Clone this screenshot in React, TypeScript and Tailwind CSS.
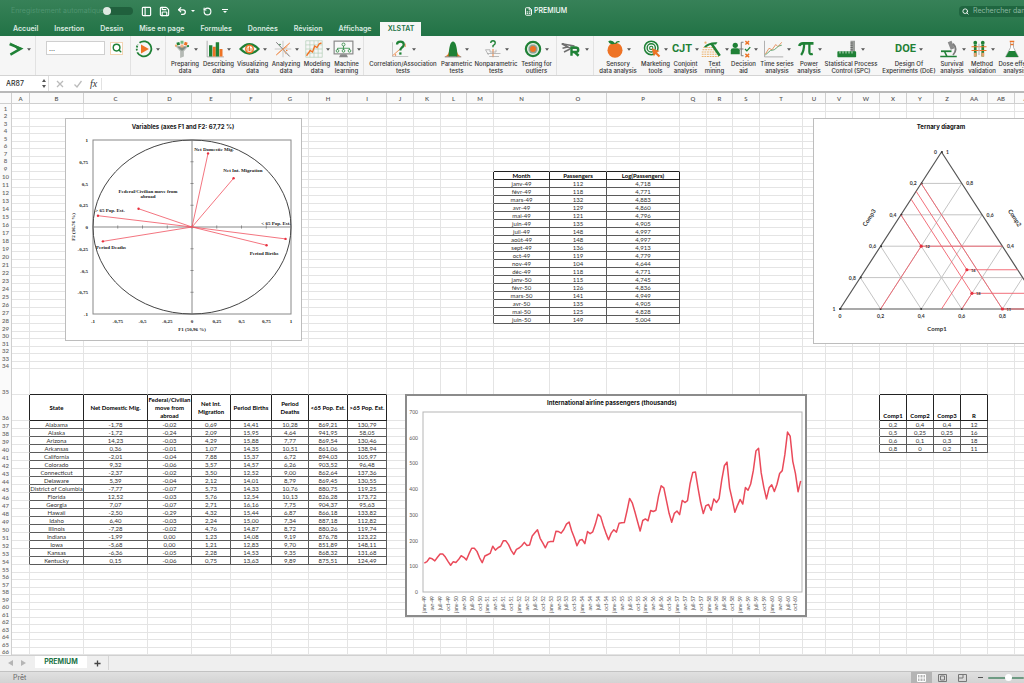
import React from 'react';
import { FileSpreadsheet, Save, PanelLeft, Search, Undo2, RotateCcw } from 'lucide-react';

type CellKind = 'head' | 'body';

interface Block {
  col: number;
  row: number;
  rows: string[][];
}

interface Tool {
  name: string;
  lines: string[];
  width: string;
  icon: React.ReactNode;
}

const GREEN = '#1f8136';
const ORANGE = '#ee7325';

/* ---------- Sheet data ---------- */

const COLUMNS: [string, number | undefined][] = [
  ['A', 18], ['B', 54], ['C', 64], ['D', 44], ['E', 39], ['F', 41], ['G', 37], ['H', 39], ['I', 39],
  ['J', 27], ['K', 27], ['L', 26], ['M', 27], ['N', 56], ['O', 57], ['P', 73], ['Q', 27], ['R', 26],
  ['S', 27], ['T', 43], ['U', 23], ['V', 27], ['W', 27], ['X', 27], ['Y', 27], ['Z', 27], ['AA', 27],
  ['AB', 27], ['AC', undefined],
];

const STATES: Block = {
  col: 1,
  row: 36,
  rows: [
    ['State', 'Net Domestic Mig.', 'Federal/Civilian move from abroad', 'Net Int. Migration', 'Period Births', 'Period Deaths', '<65 Pop. Est.', '>65 Pop. Est.'],
    ['Alabama', '-1,78', '-0,02', '0,69', '14,41', '10,28', '869,21', '130,79'],
    ['Alaska', '-1,72', '-0,24', '2,09', '15,95', '4,64', '941,95', '58,05'],
    ['Arizona', '14,23', '-0,03', '4,29', '15,88', '7,77', '869,54', '130,46'],
    ['Arkansas', '0,36', '-0,01', '1,07', '14,35', '10,51', '861,06', '138,94'],
    ['California', '-2,01', '-0,04', '7,88', '15,37', '6,72', '894,03', '105,97'],
    ['Colorado', '9,32', '-0,06', '3,57', '14,57', '6,26', '903,52', '96,48'],
    ['Connecticut', '-2,37', '-0,02', '3,50', '12,52', '9,00', '862,64', '137,36'],
    ['Delaware', '5,39', '-0,04', '2,12', '14,01', '8,79', '869,45', '130,55'],
    ['District of Columbia', '-7,77', '-0,07', '5,73', '14,33', '10,76', '880,75', '119,25'],
    ['Florida', '12,52', '-0,03', '5,76', '12,54', '10,13', '826,28', '173,72'],
    ['Georgia', '7,07', '-0,07', '2,71', '16,16', '7,75', '904,37', '95,63'],
    ['Hawaii', '-2,50', '-0,29', '4,32', '15,44', '6,87', '866,18', '133,82'],
    ['Idaho', '6,40', '-0,03', '2,24', '15,00', '7,34', '887,18', '112,82'],
    ['Illinois', '-7,28', '-0,02', '4,76', '14,87', '8,72', '880,26', '119,74'],
    ['Indiana', '-1,99', '0,00', '1,23', '14,08', '9,19', '876,78', '123,22'],
    ['Iowa', '-5,68', '0,00', '1,21', '12,83', '9,70', '851,89', '148,11'],
    ['Kansas', '-6,36', '-0,05', '2,28', '14,53', '9,35', '868,32', '131,68'],
    ['Kentucky', '0,15', '-0,06', '0,75', '13,63', '9,89', '875,51', '124,49'],
  ],
};

const MONTHS: Block = {
  col: 13,
  row: 10,
  rows: [
    ['Month', 'Passengers', 'Log(Passengers)'],
    ['janv-49', '112', '4,718'],
    ['févr-49', '118', '4,771'],
    ['mars-49', '132', '4,883'],
    ['avr-49', '129', '4,860'],
    ['mai-49', '121', '4,796'],
    ['juin-49', '135', '4,905'],
    ['juil-49', '148', '4,997'],
    ['août-49', '148', '4,997'],
    ['sept-49', '136', '4,913'],
    ['oct-49', '119', '4,779'],
    ['nov-49', '104', '4,644'],
    ['déc-49', '118', '4,771'],
    ['janv-50', '115', '4,745'],
    ['févr-50', '126', '4,836'],
    ['mars-50', '141', '4,949'],
    ['avr-50', '135', '4,905'],
    ['mai-50', '125', '4,828'],
    ['juin-50', '149', '5,004'],
  ],
};

const MIXTURES: Block = {
  col: 23,
  row: 36,
  rows: [
    ['Comp1', 'Comp2', 'Comp3', 'R'],
    ['0,2', '0,4', '0,4', '12'],
    ['0,5', '0,25', '0,25', '16'],
    ['0,6', '0,1', '0,3', '18'],
    ['0,8', '0', '0,2', '11'],
  ],
};

const PASSENGERS = [
  112, 118, 132, 129, 121, 135, 148, 148, 136, 119, 104, 118,
  115, 126, 141, 135, 125, 149, 170, 170, 158, 133, 114, 140,
  145, 150, 178, 163, 172, 178, 199, 199, 184, 162, 146, 166,
  171, 180, 193, 181, 183, 218, 230, 242, 209, 191, 172, 194,
  196, 196, 236, 235, 229, 243, 264, 272, 237, 211, 180, 201,
  204, 188, 235, 227, 234, 264, 302, 293, 259, 229, 203, 229,
  242, 233, 267, 269, 270, 315, 364, 347, 312, 274, 237, 278,
  284, 277, 317, 313, 318, 374, 413, 405, 355, 306, 271, 306,
  315, 301, 356, 348, 355, 422, 465, 467, 404, 347, 305, 336,
  340, 318, 362, 348, 363, 435, 491, 505, 404, 359, 310, 337,
  360, 342, 406, 396, 420, 472, 548, 559, 463, 407, 362, 405,
  417, 391, 419, 461, 472, 535, 622, 606, 508, 461, 390, 432,
];

const cells = new Map<string, { text: string; kind: CellKind }>();
[STATES, MONTHS, MIXTURES].forEach((block) =>
  block.rows.forEach((line, r) =>
    line.forEach((text, c) =>
      cells.set(`${block.row + r}:${block.col + c}`, { text, kind: r === 0 ? 'head' : 'body' })
    )
  )
);

const cellAt = (row: number, col: number) => cells.get(`${row}:${col}`);

const rowHeight = (row: number) => {
  if (row === 35 || row === 36) return 26;
  if ((row >= 10 && row <= 28) || (row >= 37 && row <= 54)) return 8;
  return row % 2 ? 8 : 7;
};

/* ---------- Ribbon icons ---------- */

const Glyph = ({ children, wide }: { children: React.ReactNode; wide?: boolean }) => (
  <svg viewBox={wide ? '0 0 28 24' : '0 0 24 24'} className={wide ? 'h-[18px] w-[21px]' : 'size-[18px]'} fill="none" aria-hidden="true">
    {children}
  </svg>
);

const LogoIcon = () => (
  <svg viewBox="0 0 20 20" className="h-4 w-4" fill="none" aria-hidden="true">
    <path d="M2 4 L16 9.500 L3 17" stroke={GREEN} strokeWidth="3" />
    <path d="M2 1.500 L18 9.500 L12 11 Z" fill={GREEN} />
  </svg>
);

const PlayIcon = () => (
  <svg viewBox="0 0 24 24" className="size-[18px]" fill="none" aria-hidden="true">
    <path d="M6 3.6 A10 10 0 1 1 3 16.5" stroke={GREEN} strokeWidth="2.4" />
    <path d="M2.6 14 A10 10 0 0 1 4 6" stroke={GREEN} strokeWidth="2.4" strokeDasharray="2.5 1.5" />
    <path d="M8 6 L18.5 12 L8 18 Z" fill={ORANGE} />
  </svg>
);

const FunnelIcon = () => (
  <Glyph>
    <path d="M3 8 H21 L14.5 15 V22 L9.5 24 V15 Z" fill="#b5bab5" />
    <path d="M6 9 H18 L13 14 H11 Z" fill="#7f8a80" />
    <rect x="5" y="3" width="4" height="4" fill={GREEN} transform="rotate(-15 7 5)" />
    <rect x="10" y="1" width="4" height="4" fill="#72b77c" />
    <rect x="15" y="3" width="4" height="4" fill={ORANGE} transform="rotate(20 17 5)" />
    <rect x="10" y="6" width="4" height="4" fill="#f4b183" />
    <circle cx="4" cy="7.5" r="1.5" fill="#f0a868" />
    <circle cx="20" cy="8" r="1.5" fill={GREEN} />
  </Glyph>
);

const BarsIcon = () => (
  <Glyph>
    <path d="M1.5 1 V22.5 H24" stroke="#9a9a9a" />
    <rect x="4" y="7" width="4.5" height="15" fill={GREEN} />
    <rect x="9" y="9" width="4" height="13" fill={ORANGE} />
    <rect x="13" y="3" width="4.5" height="19" fill={GREEN} />
    <rect x="18" y="12" width="4" height="10" fill={ORANGE} />
  </Glyph>
);

const EyeIcon = () => (
  <Glyph wide>
    <path d="M2 12 Q14 -1 26 12 Q14 24 2 12 Z" stroke={GREEN} strokeWidth="3" />
    <circle cx="14" cy="12" r="6" fill={ORANGE} />
    <circle cx="14" cy="12" r="4" fill="#fff" />
    <path d="M12 15 V10 M14 15 V8.500 M16 15 V11" stroke={ORANGE} strokeWidth="1.300" />
  </Glyph>
);

const ScatterIcon = () => (
  <Glyph>
    <path d="M12 1 V23 M1 12 H23" stroke="#b9b9b9" />
    <path d="M3 3 L21 22" stroke="#777" strokeWidth="1.300" />
    <path d="M3 20 L21 4" stroke={ORANGE} strokeWidth="1.300" />
    <path d="M12 12 L6 17 M12 12 L18 9 M12 12 L16 19" stroke="#e9a06b" />
    <circle cx="8" cy="6" r="1" fill={GREEN} />
    <circle cx="17" cy="14" r="1" fill={ORANGE} />
  </Glyph>
);

const ModelIcon = () => (
  <Glyph>
    <path d="M1 1 H23 V23 H1 Z M6.500 1 V23 M12 1 V23 M17.500 1 V23 M1 6.500 H23 M1 12 H23 M1 17.500 H23" stroke="#a9c9ae" strokeWidth="0.800" />
    <path d="M2 21 L7 14 L10 16 L13 8 L16 10 L19 5 L22 4" stroke={ORANGE} strokeWidth="1.800" />
  </Glyph>
);

const MachineIcon = () => (
  <Glyph wide>
    <rect x="1.500" y="1.500" width="25" height="17" stroke="#8a8a8a" strokeWidth="1.600" fill="#f8f8f8" />
    <circle cx="14" cy="6" r="2" stroke={GREEN} />
    <path d="M14 8 V11 M6 11 H22 M6 11 V13 M14 11 V13 M22 11 V13" stroke={GREEN} />
    <circle cx="6" cy="14.500" r="1.800" stroke={GREEN} />
    <circle cx="14" cy="14.500" r="1.800" stroke={GREEN} />
    <circle cx="22" cy="14.500" r="1.800" stroke={GREEN} />
    <path d="M10 19 H18 L20 23 H8 Z" fill="#8a8a8a" />
  </Glyph>
);

const CorrelationIcon = () => (
  <Glyph>
    <path d="M2 3 V22 H23" stroke="#b5b5b5" />
    <path d="M2 21 L20 5" stroke={ORANGE} />
    <circle cx="6" cy="20" r="1" fill={ORANGE} />
    <circle cx="19" cy="8" r="1" fill={ORANGE} />
    <path d="M8 6 Q8 2 12.500 2 Q17 2 17 6 Q17 9 14 10.500 Q12.500 11.500 12.500 14" stroke={GREEN} strokeWidth="3" />
    <rect x="11" y="16.500" width="3" height="3" fill={GREEN} />
  </Glyph>
);

const BellIcon = () => (
  <Glyph>
    <path d="M1 22 Q7 20 8 10 V22 Z M23 22 Q17 20 16 10 V22 Z" fill={ORANGE} />
    <path d="M6 22 Q7 2 12 2 Q17 2 18 22 Z" fill={GREEN} />
    <path d="M1 22.500 H23" stroke="#666" />
  </Glyph>
);

const NonparametricIcon = () => (
  <Glyph>
    <path d="M9 4 Q9 1 12 1 Q15 1 15 4 Q15 6 12 7.500 V9.500" stroke={GREEN} strokeWidth="1.800" />
    <path d="M12 12 V23" stroke={ORANGE} strokeWidth="1.200" />
    <path d="M2 13 H8 V16 H16 V13 M4 18 H22 M7 22 H20 M2 13 L6 20" stroke="#a5a5a5" />
  </Glyph>
);

const OutlierIcon = () => (
  <Glyph>
    <circle cx="12" cy="12" r="9.500" stroke={GREEN} strokeWidth="3" />
    <circle cx="12" cy="12" r="6.500" stroke="#cfe2d2" strokeWidth="1.500" />
    <circle cx="12" cy="12" r="6" fill="#8fa093" />
    <circle cx="12" cy="12" r="4" fill={ORANGE} />
  </Glyph>
);

const RIcon = () => (
  <Glyph wide>
    <path d="M1 5 L18 8 M1 5 L12 11 H24 M2 11 L10 9 M4 16 L12 12" stroke="#707070" strokeWidth="2" />
    <path d="M14 21 V10 H19 Q23 10 23 13.200 Q23 16 19 16 H14 M18 16 L23.500 21" stroke={GREEN} strokeWidth="3.200" />
  </Glyph>
);

const OrangeIcon = () => (
  <Glyph>
    <circle cx="12" cy="13.500" r="10" fill={ORANGE} />
    <path d="M12.500 5 Q8 -1 3 1.500 Q5 7 12.500 5 Z" fill={GREEN} />
    <path d="M12.500 5 Q15 1 18 2.500" stroke={GREEN} strokeWidth="1.600" />
  </Glyph>
);

const TargetIcon = () => (
  <Glyph>
    <circle cx="11" cy="10.500" r="9" stroke={GREEN} strokeWidth="2" />
    <circle cx="11" cy="10.500" r="5.500" stroke={GREEN} strokeWidth="1.800" />
    <circle cx="11" cy="10.500" r="2.200" stroke={GREEN} strokeWidth="1.400" />
    <path d="M11.500 11 L22 14.500 L18.500 16.500 L23 21 L21 23 L16.500 18.500 L14.500 22 Z" fill={ORANGE} />
  </Glyph>
);

const MiningIcon = () => (
  <Glyph wide>
    <path d="M3 10 H19 M2 13 H20 M1 16 H22 M1 19 H24 M1 22 H24" stroke="#ecb36f" strokeWidth="1.600" strokeDasharray="2.500 1" />
    <circle cx="6" cy="3.500" r="1.500" fill="#ecb36f" />
    <path d="M4 9 Q10 2 22 3 L20 6 Q12 5 6 10 Z" fill={GREEN} />
    <path d="M14 5 L25 21" stroke={GREEN} strokeWidth="3.400" />
  </Glyph>
);

const DecisionIcon = () => (
  <Glyph wide>
    <circle cx="7" cy="7" r="3.500" fill={GREEN} />
    <path d="M1 19 V13.500 Q1 11 4 11 H10 Q13 11 13 13.500 V19 Z" fill={GREEN} />
    <path d="M18 3 H15 V21 H18 M12 12 H18" stroke="#777" strokeWidth="1.300" />
    <path d="M20.500 1.500 L25.500 6 M25.500 1.500 L20.500 6" stroke={ORANGE} strokeWidth="1.800" />
    <path d="M20 12 L22.500 14.500 L27 9.500" stroke={GREEN} strokeWidth="1.800" />
    <path d="M20.500 18.500 L25.500 23 M25.500 18.500 L20.500 23" stroke={ORANGE} strokeWidth="1.800" />
  </Glyph>
);

const SeriesIcon = () => (
  <Glyph wide>
    <path d="M2 1 V22.500 H27" stroke="#999" />
    <path d="M3 19 L8 11 L12 13 L17 6 L20 9 L25 3" stroke="#e79461" strokeWidth="1.300" />
    <path d="M3 20 L10 14 L15 13 L21 8 L25 7" stroke="#6aa775" strokeWidth="1.300" />
  </Glyph>
);

const PiIcon = () => (
  <Glyph>
    <path d="M3 8 Q4 4.500 8 4.500 H22" stroke={GREEN} strokeWidth="3.400" />
    <path d="M9.500 5 Q9.500 15 5.500 20 M16.500 5 V16 Q16.500 20 21 18.500" stroke={GREEN} strokeWidth="3" />
  </Glyph>
);

const SpcIcon = () => (
  <Glyph wide>
    <rect x="18" y="1" width="6" height="20" fill="#9a9d9a" />
    <path d="M18 4 H21 M18 7 H21 M18 10 H21 M18 13 H21" stroke="#555" />
    <rect x="0.500" y="15" width="25" height="8" rx="1" fill={GREEN} />
    <path d="M4 15 V18 M8 15 V18 M12 15 V18 M16 15 V18 M20 15 V18" stroke="#fff" />
  </Glyph>
);

const MicroscopeIcon = () => (
  <Glyph wide>
    <path d="M13 3 L18 1 L22 11 L17 13 Z" fill="#8b8b8b" />
    <path d="M20 5 Q27 12 20 20" stroke="#7b7b7b" strokeWidth="2.400" />
    <path d="M4 15 H18" stroke={GREEN} strokeWidth="2.400" />
    <path d="M9 16 L12 22 M3 22 H25" stroke={GREEN} strokeWidth="2.200" />
  </Glyph>
);

const TubesIcon = () => (
  <Glyph>
    <circle cx="7" cy="3.500" r="2.500" fill={GREEN} />
    <circle cx="17" cy="3.500" r="2.500" fill={GREEN} />
    <path d="M7 6 V22 M17 6 V22" stroke={GREEN} strokeWidth="3.600" />
    <path d="M2 9 H22 M2 14 H22" stroke={ORANGE} strokeWidth="1.600" />
    <path d="M7 17 V22 M17 17 V22" stroke="#e8a06c" strokeWidth="3.600" />
    <path d="M12 5 V20" stroke="#bbb" strokeWidth="1.600" />
  </Glyph>
);

const FlaskIcon = () => (
  <Glyph>
    <path d="M10 3 V10 L3.500 22.500 H20.500 L14 10 V3" stroke="#999" fill="#fff" />
    <path d="M8 14.500 H16 L20.500 22.500 H3.500 Z" fill={GREEN} />
    <path d="M9 2 H15 M10 6 H14" stroke={ORANGE} strokeWidth="2" />
  </Glyph>
);

const WordIcon = ({ text }: { text: string }) => (
  <span className="flex h-[18px] items-center font-['Roboto',sans-serif] text-[11px] font-bold text-[#1f8136]">{text}</span>
);

const TOOLS: (Tool | 'divider')[] = [
  { name: 'preparing', lines: ['Preparing', 'data'], width: 'w-[34px]', icon: <FunnelIcon /> },
  { name: 'describing', lines: ['Describing', 'data'], width: 'w-[33px]', icon: <BarsIcon /> },
  { name: 'visualizing', lines: ['Visualizing', 'data'], width: 'w-[35px]', icon: <EyeIcon /> },
  { name: 'analyzing', lines: ['Analyzing', 'data'], width: 'w-8', icon: <ScatterIcon /> },
  { name: 'modeling', lines: ['Modeling', 'data'], width: 'w-[30px]', icon: <ModelIcon /> },
  { name: 'machine', lines: ['Machine', 'learning'], width: 'w-[29px]', icon: <MachineIcon /> },
  'divider',
  { name: 'correlation', lines: ['Correlation/Association', 'tests'], width: 'w-[74px]', icon: <CorrelationIcon /> },
  { name: 'parametric', lines: ['Parametric', 'tests'], width: 'w-[33px]', icon: <BellIcon /> },
  { name: 'nonparametric', lines: ['Nonparametric', 'tests'], width: 'w-[46px]', icon: <NonparametricIcon /> },
  { name: 'outliers', lines: ['Testing for', 'outliers'], width: 'w-[35px]', icon: <OutlierIcon /> },
  'divider',
  { name: 'R', lines: [], width: 'w-8', icon: <RIcon /> },
  'divider',
  { name: 'sensory', lines: ['Sensory', 'data analysis'], width: 'w-11', icon: <OrangeIcon /> },
  { name: 'marketing', lines: ['Marketing', 'tools'], width: 'w-[31px]', icon: <TargetIcon /> },
  { name: 'conjoint', lines: ['Conjoint', 'analysis'], width: 'w-[29px]', icon: <WordIcon text="CJT" /> },
  { name: 'mining', lines: ['Text', 'mining'], width: 'w-[29px]', icon: <MiningIcon /> },
  { name: 'decision', lines: ['Decision', 'aid'], width: 'w-[29px]', icon: <DecisionIcon /> },
  { name: 'series', lines: ['Time series', 'analysis'], width: 'w-[38px]', icon: <SeriesIcon /> },
  { name: 'power', lines: ['Power', 'analysis'], width: 'w-[26px]', icon: <PiIcon /> },
  { name: 'spc', lines: ['Statistical Process', 'Control (SPC)'], width: 'w-[58px]', icon: <SpcIcon /> },
  { name: 'doe', lines: ['Design Of', 'Experiments (DoE)'], width: 'w-[58px]', icon: <WordIcon text="DOE" /> },
  { name: 'survival', lines: ['Survival', 'analysis'], width: 'w-7', icon: <MicroscopeIcon /> },
  { name: 'method', lines: ['Method', 'validation'], width: 'w-8', icon: <TubesIcon /> },
  { name: 'dose', lines: ['Dose effect', 'analysis'], width: 'w-[34px]', icon: <FlaskIcon /> },
];

const Caret = () => (
  <svg viewBox="0 0 6 4" className="h-[3px] w-1 shrink-0" aria-hidden="true">
    <path d="M0 0 H6 L3 4 Z" fill="#555" />
  </svg>
);

const Divider = () => <div className="mx-0.5 h-full w-px shrink-0 bg-[#e2e2e2]" />;

/* ---------- Header ---------- */

const TABS = ['Accueil', 'Insertion', 'Dessin', 'Mise en page', 'Formules', 'Données', 'Révision', 'Affichage'];

const Header = () => (
  <header className="shrink-0 bg-linear-to-b from-[#378158] to-[#217346] text-white">
    <div className="flex h-[22px] items-center pl-[11px]">
      <div className="flex w-[513px] items-center">
        <label htmlFor="autosave" className="w-[92px] text-[7px] whitespace-nowrap text-[#4f9470]">
          Enregistrement automatique
        </label>
        <input
          id="autosave"
          type="checkbox"
          className="h-2 w-[30px] appearance-none rounded-full bg-[#20603d] before:block before:size-2 before:rounded-full before:bg-[#dfeae3]"
        />
        <button aria-label="Volet" className="ml-2"><PanelLeft size={11} strokeWidth={2.5} /></button>
        <button aria-label="Enregistrer" className="ml-[7px]"><Save size={11} strokeWidth={2.5} /></button>
        <button aria-label="Annuler" className="ml-[7px]"><Undo2 size={10} strokeWidth={3} /></button>
        <span className="ml-1 border-x-2 border-t-2 border-x-transparent border-t-white" />
        <button aria-label="Rétablir" className="ml-2"><RotateCcw size={9} strokeWidth={3} /></button>
        <button aria-label="Personnaliser" className="ml-2.5 flex flex-col items-center gap-px">
          <span className="h-px w-1.5 bg-white" />
          <span className="border-x-2 border-t-2 border-x-transparent border-t-white" />
        </button>
      </div>
      <FileSpreadsheet size={9} strokeWidth={2.5} />
      <h1 className="ml-px text-[7px] font-medium">PREMIUM</h1>
      <div className="ml-auto flex h-[11px] w-[65px] items-center gap-1 overflow-hidden rounded-l-sm bg-[#1f6640] pl-[3px]">
        <Search size={7} strokeWidth={3} className="shrink-0" />
        <input
          type="search"
          aria-label="Rechercher"
          placeholder="Rechercher dans la feuille"
          className="w-24 shrink-0 text-[7px] outline-none placeholder:text-[#8db8a0]"
        />
      </div>
    </div>
    <nav className="flex h-3.5 items-end gap-4 pl-[13px] text-[7px] font-semibold">
      {TABS.map((tab) => (
        <button key={tab} className="h-3.5 whitespace-nowrap text-[#dcebe2]">{tab}</button>
      ))}
      <button className="-ml-[7px] h-3.5 w-[41px] bg-[#f6f6f6] text-[#217346]">XLSTAT</button>
    </nav>
  </header>
);

const Ribbon = () => (
  <div className="flex h-10 shrink-0 overflow-hidden border-b border-[#d4d4d4] bg-[#f6f6f6]">
    <button aria-label="XLSTAT" className="flex h-[26px] w-[33px] shrink-0 items-center gap-[3px] pl-2">
      <LogoIcon />
      <Caret />
    </button>
    <Divider />
    <div className="flex h-6 w-[90px] shrink-0 items-center gap-[5px] pl-2">
      <input
        aria-label="Fonction"
        defaultValue="..."
        className="h-3.5 w-[59px] border border-[#cfcfcf] bg-white px-0.5 text-[7px] text-[#444] outline-none"
      />
      <button aria-label="Chercher" className="flex size-[13px] items-center justify-center border border-[#f3d5b5] bg-white">
        <Search size={10} strokeWidth={3.5} color={GREEN} />
      </button>
    </div>
    <Divider />
    <button aria-label="Lancer" className="flex h-[26px] w-[30px] shrink-0 items-center gap-[3px] pl-0.5">
      <PlayIcon />
      <Caret />
    </button>
    <Divider />
    {TOOLS.map((tool, i) =>
      tool === 'divider' ? (
        <Divider key={i} />
      ) : (
        <button key={tool.name} aria-label={tool.name} className={`flex shrink-0 flex-col items-center pt-1 ${tool.width}`}>
          <span className="flex items-center gap-[3px]">
            {tool.icon}
            <Caret />
          </span>
          <span className="mt-0.5 text-[6px] leading-[7px] font-medium whitespace-nowrap text-[#333]">
            {tool.lines.map((line) => (
              <span key={line} className="block">{line}</span>
            ))}
          </span>
        </button>
      )
    )}
  </div>
);

const FormulaBar = () => (
  <div className="flex h-[17px] shrink-0 items-center border-b-2 border-[#b9b9b9] bg-white">
    <input aria-label="Zone Nom" defaultValue="AR87" className="h-full w-10 pl-1.5 text-[7px] leading-none font-medium text-[#333] outline-none" />
    <div className="flex h-full w-[9px] flex-col items-center justify-center gap-[3px] border-r border-[#ddd]">
      <span className="border-x-2 border-b-[3px] border-x-transparent border-b-[#555]" />
      <span className="border-x-2 border-t-[3px] border-x-transparent border-t-[#555]" />
    </div>
    <button aria-label="Annuler la saisie" className="ml-[7px]">
      <svg viewBox="0 0 8 8" className="size-2" stroke="#bbb" strokeWidth="1.3"><path d="M1 1 L7 7 M7 1 L1 7" /></svg>
    </button>
    <button aria-label="Valider" className="ml-2.5">
      <svg viewBox="0 0 8 8" className="size-2" stroke="#bbb" strokeWidth="1.3" fill="none"><path d="M0.500 4.500 L3 7 L7.500 1" /></svg>
    </button>
    <span className="ml-2 border-r border-[#e2e2e2] pr-1 font-['Liberation_Serif',serif] text-[10px] leading-3 text-[#333] italic">fx</span>
    <input aria-label="Formule" className="min-w-0 flex-1 text-[7px] outline-none" />
  </div>
);

/* ---------- Charts ---------- */

const VECTORS: { x: number; y: number; label: string[]; lx: number; ly: number }[] = [
  { x: 0.162, y: 0.846, label: ['Net Domestic Mig.'], lx: 148, ly: 32 },
  { x: 0.42, y: 0.56, label: ['Net Int. Migration'], lx: 177, ly: 53 },
  { x: -0.54, y: 0.21, label: ['Federal/Civilian move from', 'abroad'], lx: 82, ly: 74 },
  { x: -0.95, y: 0.13, label: ['> 65 Pop. Est.'], lx: 44, ly: 93 },
  { x: -0.9, y: -0.165, label: ['Period Deaths'], lx: 45, ly: 130 },
  { x: 0.945, y: -0.137, label: ['< 65 Pop. Est.'], lx: 210, ly: 106 },
  { x: 0.753, y: -0.21, label: ['Period Births'], lx: 198, ly: 136 },
];

const TICKS = [-1, -0.75, -0.5, -0.25, 0, 0.25, 0.5, 0.75, 1];

const fr = (value: number) => String(value).replace('.', ',');

const CorrelationCircle = () => {
  const px = (v: number) => 126 + 99 * v;
  const py = (v: number) => 108 - 87 * v;

  return (
    <svg viewBox="0 0 235 221" className="size-full font-['Liberation_Serif',serif] text-[5px] font-bold" fill="#222">
      <text x="117" y="10" textAnchor="middle" className="font-[Inter,sans-serif] text-[6px]">Variables (axes F1 and F2: 67,72 %)</text>
      <rect x="27" y="21" width="198" height="174" fill="none" stroke="#888" />
      <path d="M27 108 H225 M126 21 V195" stroke="#888" />
      <ellipse cx="126" cy="108" rx="99" ry="87" fill="none" stroke="#444" />
      {TICKS.map((t) => (
        <g key={t}>
          <path d={`M${px(t)} 106.500 v3 M124.500 ${py(t)} h3`} stroke="#888" />
          <text x={px(t)} y="204" textAnchor="middle">{fr(t)}</text>
          <text x="22" y={py(t) + 2} textAnchor="end">{fr(t)}</text>
        </g>
      ))}
      {VECTORS.map((v) => (
        <g key={v.label[0]}>
          <path d={`M126 108 L${px(v.x)} ${py(v.y)}`} stroke="#f0525f" strokeWidth="0.8" />
          <circle cx={px(v.x)} cy={py(v.y)} r="1.2" fill="#e8313f" />
          {v.label.map((line, i) => (
            <text key={line} x={v.lx} y={v.ly + i * 5} textAnchor="middle">{line}</text>
          ))}
        </g>
      ))}
      <text x="126" y="212" textAnchor="middle">F1 (50,96 %)</text>
      <text transform="translate(9 108) rotate(-90)" textAnchor="middle">F2 (16,76 %)</text>
    </svg>
  );
};

const TernaryDiagram = () => {
  // Comp1 runs along the base, Comp2 is the height above it
  const at = (c1: number, c2: number) => `${26 + 203 * c1 + 101.5 * c2} ${190 - 157 * c2}`;
  const steps = [0.2, 0.4, 0.6, 0.8];
  const points = MIXTURES.rows.slice(1).map(([c1, c2, , r]) => ({
    c1: Number(c1.replace(',', '.')),
    c2: Number(c2.replace(',', '.')),
    r,
  }));

  return (
    <svg viewBox="0 0 254 224" className="size-full font-['Lato',sans-serif] text-[5px] font-bold" fill="#333">
      <text x="127" y="10" textAnchor="middle" fill="#111" className="font-[Inter,sans-serif] text-[6px]">Ternary diagram</text>
      {steps.map((s) => (
        <path key={s} d={`M${at(0, s)} L${at(1 - s, s)} M${at(s, 0)} L${at(s, 1 - s)} M${at(s, 0)} L${at(0, s)}`} stroke="#c4c4c4" />
      ))}
      <path d={`M${at(0, 0)} L${at(0, 1)} L${at(1, 0)} Z`} fill="none" stroke="#555" strokeWidth="1.2" />
      {[0, ...steps, 1].map((s) => (
        <g key={s}>
          <text x={26 + 203 * s} y="199" textAnchor="middle">{fr(s)}</text>
          <text x={123 - 101.5 * s} y={35 + 157 * s} textAnchor="end">{fr(s)}</text>
          <text x={132 + 101.5 * s} y={35 + 157 * s}>{fr(Math.round((1 - s) * 10) / 10)}</text>
          <circle cx={26 + 203 * s} cy="190" r="1" />
          <circle cx={128 - 101.5 * s} cy={33 + 157 * s} r="1" />
        </g>
      ))}
      {points.map(({ c1, c2, r }) => (
        <g key={r}>
          <path
            d={`M${at(c1, 0)} L${at(c1, c2)} L${at(0, c1 + c2)} M${at(c1, c2)} L${at(1 - c2, c2)}`}
            fill="none"
            stroke="#f0606c"
            strokeWidth="0.9"
          />
          <circle cx={26 + 203 * c1 + 101.5 * c2} cy={190 - 157 * c2} r="1.600" fill="#e8313f" />
          <text x={30 + 203 * c1 + 101.5 * c2} y={192 - 157 * c2} className="text-[4px]">{r}</text>
        </g>
      ))}
      <text x="123" y="212" textAnchor="middle" className="text-[6px]">Comp1</text>
      <text transform="translate(57 100) rotate(-57)" textAnchor="middle" className="text-[6px]">Comp3</text>
      <text transform="translate(199 100) rotate(57)" textAnchor="middle" className="text-[6px]">Comp2</text>
    </svg>
  );
};

const AirlineChart = () => {
  const step = 379 / PASSENGERS.length;
  const px = (i: number) => 16 + step * (i + 0.5);
  const py = (v: number) => 196 - (v * 180) / 700;
  const quarters = ['janv', 'avr', 'juil', 'oct'];

  return (
    <svg viewBox="0 0 398 219" className="size-full font-['Lato',sans-serif] text-[5px]" fill="#555">
      <text x="205" y="9" textAnchor="middle" fill="#111" className="font-[Inter,sans-serif] text-[6px] font-bold">
        International airline passengers (thousands)
      </text>
      <rect x="16" y="16" width="379" height="180" fill="none" stroke="#b5b5b5" />
      {[0, 100, 200, 300, 400, 500, 600, 700].map((v) => (
        <text key={v} x="11" y={py(v) + 2} textAnchor="end">{v}</text>
      ))}
      <polyline
        points={PASSENGERS.map((v, i) => `${px(i)},${py(v)}`).join(' ')}
        fill="none"
        stroke="#ea4a5a"
        strokeWidth="1.500"
        strokeLinejoin="round"
      />
      {Array.from({ length: 48 }, (_, q) => (
        <text key={q} transform={`translate(${px(q * 3) + 2} 200) rotate(-90)`} textAnchor="end">
          {quarters[q % 4]}-{49 + Math.floor(q / 4)}
        </text>
      ))}
    </svg>
  );
};

/* ---------- Sheet ---------- */

const DARK = '#5a5a5a';
const LIGHT = '#e4e4e4';

const Sheet = () => (
  <main className="relative min-h-0 flex-1 overflow-hidden bg-white">
    <table className="w-full min-w-[1041px] table-fixed border-separate border-spacing-0 font-['Lato',sans-serif] text-[6px] leading-[6px] text-[#333]">
      <colgroup>
        <col style={{ width: 12 }} />
        {COLUMNS.map(([name, width]) => (
          <col key={name} style={{ width }} />
        ))}
      </colgroup>
      <thead>
        <tr className="h-[11px] bg-[#fafafa]">
          <th className="border-r border-b border-[#cfcfcf] p-0" />
          {COLUMNS.map(([name]) => (
            <th key={name} scope="col" className="border-r border-b border-[#cfcfcf] p-0 pt-px font-semibold text-[#555]">{name}</th>
          ))}
        </tr>
      </thead>
      <tbody>
        {Array.from({ length: 66 }, (_, i) => i + 1).map((row) => (
          <tr key={row} style={{ height: rowHeight(row) }}>
            <th scope="row" className="border-r border-[#cfcfcf] bg-[#fafafa] p-0 align-bottom font-semibold text-[#666]">{row}</th>
            {COLUMNS.map(([name], col) => {
              const cell = cellAt(row, col);
              const head = cell?.kind === 'head';
              const right = cell || cellAt(row, col + 1);
              const bottom = cell || cellAt(row + 1, col);
              const thick = head || cellAt(row + 1, col)?.kind === 'head';
              return (
                <td
                  key={name}
                  className={`border-r border-b p-0 text-center ${head ? 'font-bold text-black' : 'whitespace-nowrap'} ${
                    head && row === 36 ? 'leading-2' : ''
                  } ${head && col >= 23 ? 'align-bottom' : 'align-middle'}`}
                  style={{
                    borderRightColor: head || cellAt(row, col + 1)?.kind === 'head' ? '#222' : right ? DARK : LIGHT,
                    borderBottomColor: thick ? '#222' : bottom ? DARK : LIGHT,
                  }}
                >
                  {cell?.text}
                </td>
              );
            })}
          </tr>
        ))}
      </tbody>
    </table>

    <figure className="absolute top-[25px] left-[65px] h-[223px] w-[237px] border border-[#bdbdbd] bg-white">
      <CorrelationCircle />
    </figure>
    <figure className="absolute top-[25px] left-[813px] h-[226px] w-64 border border-[#bdbdbd] bg-white">
      <TernaryDiagram />
    </figure>
    <figure className="absolute top-[301px] left-[405px] h-[223px] w-[402px] border-2 border-[#8b8b8b] bg-white">
      <AirlineChart />
    </figure>
  </main>
);

const Footer = () => (
  <footer className="shrink-0">
    <div className="flex h-4 items-start border-t border-[#d0d0d0] bg-[#efefef]">
      <div className="flex h-3.5 w-[35px] items-center gap-2 pl-2">
        <button aria-label="Feuille précédente" className="border-y-[3px] border-r-[5px] border-y-transparent border-r-[#b5b5b5]" />
        <button aria-label="Feuille suivante" className="border-y-[3px] border-l-[5px] border-y-transparent border-l-[#b5b5b5]" />
      </div>
      <button className="h-3 w-[52px] bg-white text-[7px] font-bold text-[#217346]">PREMIUM</button>
      <button aria-label="Nouvelle feuille" className="flex h-3.5 w-[22px] items-center justify-center border-r border-[#d5d5d5]">
        <svg viewBox="0 0 8 8" className="size-[7px]" stroke="#444" strokeWidth="1.5"><path d="M4 0.500 V7.500 M0.500 4 H7.500" /></svg>
      </button>
    </div>
    <div className="flex h-3 items-center border-t border-[#c2c2c2] bg-linear-to-b from-[#e0e0e0] to-[#d3d3d3] pl-[13px] text-[7px] leading-none text-[#666]">
      <span>Prêt</span>
      <div className="ml-auto flex h-full items-center">
        <button aria-label="Normal" className="flex h-full w-[21px] items-center justify-center bg-[#b4b4b4]">
          <svg viewBox="0 0 9 8" className="h-2 w-[9px]" stroke="#fff" fill="none"><path d="M0.500 0.500 H8.500 V7.500 H0.500 Z M3 0 V8 M6 0 V8 M0 4 H9" /></svg>
        </button>
        <button aria-label="Mise en page" className="flex h-full w-5 items-center justify-center">
          <svg viewBox="0 0 9 8" className="h-2 w-[9px]" stroke="#777" fill="none"><path d="M0.500 0.500 H8.500 V7.500 H0.500 Z M2.500 2 H6.500 V6 H2.500 Z" /></svg>
        </button>
        <button aria-label="Sauts de page" className="flex h-full w-5 items-center justify-center">
          <svg viewBox="0 0 9 8" className="h-2 w-[9px]" stroke="#777" fill="none"><path d="M0.500 0.500 H8.500 V7.500 H0.500 Z M0.500 4 H5 V0.500" /></svg>
        </button>
        <button aria-label="Zoom arrière" className="ml-1 flex w-2 justify-center"><span className="h-px w-[5px] bg-[#555]" /></button>
        <input
          type="range"
          aria-label="Zoom"
          defaultValue={60}
          className="ml-1 h-0.5 w-9 appearance-none rounded bg-[#6f9b83] [&::-webkit-slider-thumb]:size-[7px] [&::-webkit-slider-thumb]:appearance-none [&::-webkit-slider-thumb]:rounded-full [&::-webkit-slider-thumb]:bg-white"
        />
      </div>
    </div>
  </footer>
);

const App: React.FC = () => {
  return (
    <div className="flex h-screen flex-col overflow-hidden bg-white font-[Inter,sans-serif]">
      <Header />
      <Ribbon />
      <FormulaBar />
      <Sheet />
      <Footer />
    </div>
  );
};

export default App;
